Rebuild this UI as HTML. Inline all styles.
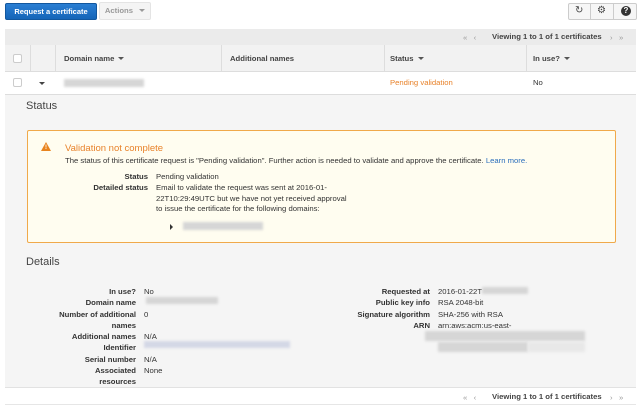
<!DOCTYPE html>
<html><head><style>
*{margin:0;padding:0;box-sizing:border-box}
body{width:640px;height:410px;background:#fff;font-family:"Liberation Sans",Arial,sans-serif;font-size:7.7px;color:#333;position:relative;overflow:hidden}
.a{position:absolute;white-space:nowrap}
.b{font-weight:bold}
.blur{position:absolute;background:#d6d6d6;filter:blur(1.2px)}
.r{text-align:right}
.caret{display:inline-block;width:0;height:0;border-left:3px solid transparent;border-right:3px solid transparent;border-top:3px solid #555;vertical-align:middle;margin-left:4px}
</style></head><body>
<div class="a" style="left:5px;top:3px;width:92px;height:17px;background:linear-gradient(#2a7ed3,#1565b8);border:1px solid #12579e;border-radius:2px;color:#fff;font-weight:bold;font-size:7.5px;line-height:15px;text-align:center">Request a certificate</div>
<div class="a" style="left:99px;top:2px;width:52px;height:18px;background:#f4f4f4;border:1px solid #e4e4e4;border-radius:2px;color:#999;font-weight:bold;line-height:16px;text-align:center">Actions <span class="caret" style="border-top-color:#999"></span></div>
<div class="a" style="left:568px;top:3px;width:69px;height:17px;border:1px solid #ccc;border-radius:2px;background:#f6f6f6"></div>
<div class="a" style="left:590px;top:3px;width:1px;height:17px;background:#ccc"></div>
<div class="a" style="left:613px;top:3px;width:1px;height:17px;background:#ccc"></div>
<div class="a" style="left:575px;top:5px;font-size:10px;color:#444">&#8635;</div>
<div class="a" style="left:597px;top:5px;font-size:10px;color:#444">&#9881;</div>
<div class="a" style="left:621px;top:6px;width:10px;height:10px;border-radius:50%;background:#333;color:#fff;font-size:8px;font-weight:bold;text-align:center;line-height:10px">?</div>

<div class="a" style="left:5px;top:29px;width:631px;height:16px;background:#ebebeb"></div>
<div class="a" style="left:463px;top:33px;color:#999">«&nbsp;&nbsp;&nbsp;‹</div>
<div class="a b" style="left:492px;top:32px;color:#444">Viewing 1 to 1 of 1 certificates</div>
<div class="a" style="left:610px;top:33px;color:#999">›&nbsp;&nbsp;&nbsp;»</div>

<div class="a" style="left:5px;top:45px;width:631px;height:27px;background:#f2f2f2;border-bottom:1px solid #ddd"></div>
<div class="a" style="left:30px;top:45px;width:1px;height:27px;background:#ddd"></div>
<div class="a" style="left:55px;top:45px;width:1px;height:27px;background:#ddd"></div>
<div class="a" style="left:221px;top:45px;width:1px;height:27px;background:#ddd"></div>
<div class="a" style="left:384px;top:45px;width:1px;height:27px;background:#ddd"></div>
<div class="a" style="left:526px;top:45px;width:1px;height:27px;background:#ddd"></div>
<div class="a" style="left:13px;top:54px;width:9px;height:9px;border:1px solid #ccc;border-radius:2px;background:#fff"></div>
<div class="a b" style="left:64px;top:54px;color:#444">Domain name<span class="caret"></span></div>
<div class="a b" style="left:230px;top:54px;color:#444">Additional names</div>
<div class="a b" style="left:390px;top:54px;color:#444">Status<span class="caret"></span></div>
<div class="a b" style="left:533px;top:54px;color:#444">In use?<span class="caret"></span></div>

<div class="a" style="left:5px;top:94px;width:631px;height:1px;background:#ddd"></div>
<div class="a" style="left:13px;top:78px;width:9px;height:9px;border:1px solid #ccc;border-radius:2px;background:#fff"></div>
<div class="a" style="left:39px;top:82px;width:0;height:0;border-left:3px solid transparent;border-right:3px solid transparent;border-top:3px solid #444"></div>
<div class="blur" style="left:64px;top:79px;width:80px;height:8px"></div>
<div class="a" style="left:390px;top:78px;color:#e8822a">Pending validation</div>
<div class="a" style="left:533px;top:78px">No</div>

<div class="a" style="left:5px;top:95px;width:631px;height:293px;background:#f5f5f5;border-bottom:1px solid #e2e2e2"></div>
<div class="a" style="left:26px;top:100px;font-size:11px;color:#444">Status</div>
<div class="a" style="left:27px;top:130px;width:589px;height:113px;background:#fffdf0;border:1px solid #f0a94a;border-radius:2px"></div>
<div class="a" style="left:41px;top:142px;width:0;height:0;border-left:5px solid transparent;border-right:5px solid transparent;border-bottom:9px solid #e8841f"></div>
<div class="a" style="left:45px;top:145px;color:#fff;font-size:6px;font-weight:bold">!</div>
<div class="a" style="left:65px;top:143px;font-size:9.5px;color:#e8822a">Validation not complete</div>
<div class="a" style="left:65px;top:156px">The status of this certificate request is "Pending validation". Further action is needed to validate and approve the certificate. <span style="color:#2a6ebb">Learn more.</span></div>
<div class="a b r" style="left:60px;width:88px;top:172px">Status</div>
<div class="a" style="left:156px;top:172px">Pending validation</div>
<div class="a b r" style="left:60px;width:88px;top:183px">Detailed status</div>
<div class="a" style="left:156px;top:183px;line-height:10.5px">Email to validate the request was sent at 2016-01-<br>22T10:29:49UTC but we have not yet received approval<br>to issue the certificate for the following domains:</div>
<div class="a" style="left:170px;top:224px;width:0;height:0;border-top:3px solid transparent;border-bottom:3px solid transparent;border-left:3px solid #333"></div>
<div class="blur" style="left:183px;top:222px;width:80px;height:8px"></div>

<div class="a" style="left:26px;top:256px;font-size:11px;color:#444">Details</div>
<div class="a b r" style="left:20px;width:116px;top:286px;line-height:11.3px">In use?<br>Domain name<br>Number of additional<br>names<br>Additional names<br>Identifier<br>Serial number<br>Associated<br>resources</div>
<div class="a" style="left:144px;top:286px;line-height:11.3px">No<br><br>0<br><br>N/A<br><br>N/A<br>None</div>
<div class="blur" style="left:146px;top:297px;width:72px;height:7px"></div>
<div class="blur" style="left:144px;top:341px;width:146px;height:7px;background:#d4d8e6"></div>
<div class="a b r" style="left:340px;width:90px;top:286px;line-height:11.3px">Requested at<br>Public key info<br>Signature algorithm<br>ARN</div>
<div class="a" style="left:438px;top:286px;line-height:11.3px">2016-01-22T<br>RSA 2048-bit<br>SHA-256 with RSA<br>arn:aws:acm:us-east-</div>
<div class="blur" style="left:482px;top:287px;width:46px;height:7px"></div>
<div class="blur" style="left:425px;top:331px;width:160px;height:10px"></div>
<div class="blur" style="left:438px;top:342px;width:90px;height:10px"></div>
<div class="blur" style="left:528px;top:342px;width:57px;height:10px;background:#e8e8e8"></div>

<div class="a" style="left:5px;top:389px;width:631px;height:16px;background:#fff;border-bottom:1px solid #e6e6e6"></div>
<div class="a" style="left:463px;top:393px;color:#999">«&nbsp;&nbsp;&nbsp;‹</div>
<div class="a b" style="left:492px;top:392px;color:#444">Viewing 1 to 1 of 1 certificates</div>
<div class="a" style="left:610px;top:393px;color:#999">›&nbsp;&nbsp;&nbsp;»</div>
</body></html>
